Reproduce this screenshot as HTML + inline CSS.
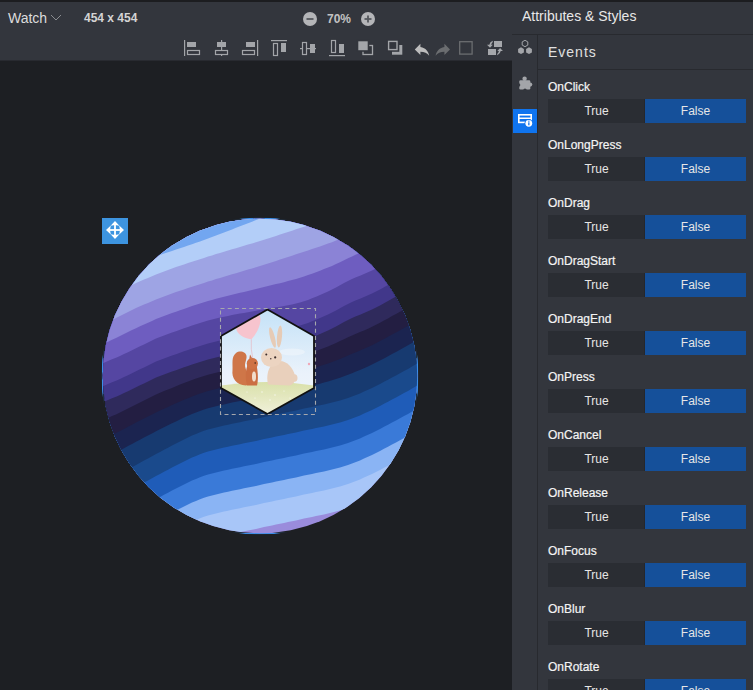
<!DOCTYPE html>
<html><head><meta charset="utf-8">
<style>
*{margin:0;padding:0;box-sizing:border-box}
html,body{width:753px;height:690px;overflow:hidden;background:#33363d;font-family:"Liberation Sans",sans-serif;color:#e6e6e6}
.abs{position:absolute}
#topstrip{left:0;top:0;width:753px;height:2px;background:#1c1d20}
#canvas{left:0;top:60px;width:512px;height:630px;background:#1d1f23;border-top:1px solid #282a30}
.t{position:absolute;white-space:nowrap;line-height:1}
#hdrline{left:512px;top:34px;width:241px;height:1px;background:#282a2f}
#vline{left:537px;top:35px;width:1px;height:655px;background:#282a2f}
#evline{left:538px;top:69px;width:215px;height:1px;background:#282a2f}
.lbl{position:absolute;left:548px;font-size:12px;color:#f4f4f4;line-height:1;-webkit-text-stroke:0.2px #f4f4f4}
.bt{position:absolute;left:548px;width:97px;height:24px;background:#2a2d33;box-shadow:inset -1px 0 0 #25272c;color:#e6e6e6;font-size:12px;line-height:24px;text-align:center}
.bf{position:absolute;left:645px;width:101px;height:24px;background:#15509a;color:#e6e6e6;font-size:12px;line-height:24px;text-align:center}
</style></head><body>
<div id="topstrip" class="abs"></div>
<div id="canvas" class="abs"></div>
<svg class="abs" style="left:0;top:0" width="512" height="690" viewBox="0 0 512 690">
<defs><clipPath id="cc"><circle cx="260" cy="376" r="157.2"/></clipPath><clipPath id="cc2"><circle cx="260" cy="376" r="158.6"/></clipPath>
<clipPath id="hx"><polygon points="267.5,309.5 314,336 314,388 267.5,414 221,388 221,336"/></clipPath>
<linearGradient id="sky" x1="0" y1="0" x2="0" y2="1"><stop offset="0" stop-color="#c2e1f7"/><stop offset="0.6" stop-color="#eaf2fb"/><stop offset="1" stop-color="#f2f6fb"/></linearGradient>
<linearGradient id="grass" x1="0" y1="0" x2="0" y2="1"><stop offset="0" stop-color="#d9e0aa"/><stop offset="0.5" stop-color="#e6e9c4"/><stop offset="1" stop-color="#f3f2e0"/></linearGradient>
</defs>
<rect x="102.5" y="218.5" width="315" height="315" fill="none" stroke="#3b8ee8" stroke-width="1.3" clip-path="url(#cc2)"/>
<g clip-path="url(#cc)">
<rect x="96" y="210" width="330" height="330" fill="#9a8cdc"/>
<polygon points="96,200 96,598.0 100,595.6 104,593.3 108,590.9 112,588.6 116,586.3 120,584.0 124,581.7 128,579.5 132,577.2 136,575.0 140,572.8 144,570.6 148,568.5 152,566.3 156,564.1 160,562.0 164,559.8 168,557.7 172,555.6 176,553.4 180,551.4 184,549.4 188,547.4 192,545.6 196,543.9 200,542.3 204,540.8 208,539.6 212,538.5 216,537.5 220,536.5 224,535.6 228,534.7 232,533.8 236,533.0 240,532.2 244,531.3 248,530.5 252,529.7 256,528.9 260,528.0 264,527.1 268,526.3 272,525.5 276,524.6 280,523.8 284,523.0 288,522.1 292,521.3 296,520.4 300,519.5 304,518.6 308,517.7 312,516.9 316,516.1 320,515.2 324,514.4 328,513.5 332,512.6 336,511.5 340,510.5 344,509.3 348,508.0 352,506.6 356,505.0 360,503.4 364,501.6 368,499.8 372,497.9 376,495.9 380,493.9 384,491.8 388,489.7 392,487.6 396,485.5 400,483.3 404,481.1 408,478.9 412,476.5 416,474.2 420,471.9 424,469.5 426,200" fill="#a8c6f8"/>
<polygon points="96,200 96,574.0 100,571.6 104,569.3 108,566.9 112,564.6 116,562.3 120,560.0 124,557.7 128,555.5 132,553.2 136,551.0 140,548.8 144,546.6 148,544.5 152,542.3 156,540.1 160,538.0 164,535.8 168,533.7 172,531.6 176,529.4 180,527.4 184,525.4 188,523.4 192,521.6 196,519.9 200,518.3 204,516.8 208,515.6 212,514.5 216,513.5 220,512.5 224,511.6 228,510.7 232,509.8 236,509.0 240,508.2 244,507.3 248,506.5 252,505.7 256,504.9 260,504.0 264,503.1 268,502.3 272,501.5 276,500.6 280,499.8 284,499.0 288,498.1 292,497.3 296,496.4 300,495.5 304,494.6 308,493.7 312,492.9 316,492.1 320,491.2 324,490.4 328,489.5 332,488.6 336,487.5 340,486.5 344,485.3 348,484.0 352,482.6 356,481.0 360,479.4 364,477.6 368,475.8 372,473.9 376,471.9 380,469.9 384,467.8 388,465.7 392,463.6 396,461.5 400,459.3 404,457.1 408,454.9 412,452.5 416,450.2 420,447.9 424,445.5 426,200" fill="#8ab4f4"/>
<polygon points="96,200 96,555.0 100,552.6 104,550.3 108,547.9 112,545.6 116,543.3 120,541.0 124,538.7 128,536.5 132,534.2 136,532.0 140,529.8 144,527.6 148,525.5 152,523.3 156,521.1 160,519.0 164,516.8 168,514.7 172,512.6 176,510.4 180,508.4 184,506.4 188,504.4 192,502.6 196,500.9 200,499.3 204,497.8 208,496.6 212,495.5 216,494.5 220,493.5 224,492.6 228,491.7 232,490.8 236,490.0 240,489.2 244,488.3 248,487.5 252,486.7 256,485.9 260,485.0 264,484.1 268,483.3 272,482.5 276,481.6 280,480.8 284,480.0 288,479.1 292,478.3 296,477.4 300,476.5 304,475.6 308,474.7 312,473.9 316,473.1 320,472.2 324,471.4 328,470.5 332,469.6 336,468.5 340,467.5 344,466.3 348,465.0 352,463.6 356,462.0 360,460.4 364,458.6 368,456.8 372,454.9 376,452.9 380,450.9 384,448.8 388,446.7 392,444.6 396,442.5 400,440.3 404,438.1 408,435.9 412,433.5 416,431.2 420,428.9 424,426.5 426,200" fill="#3a7ad8"/>
<polygon points="96,200 96,533.0 100,530.6 104,528.3 108,525.9 112,523.6 116,521.3 120,519.0 124,516.7 128,514.5 132,512.2 136,510.0 140,507.8 144,505.6 148,503.5 152,501.3 156,499.1 160,497.0 164,494.8 168,492.7 172,490.6 176,488.4 180,486.4 184,484.4 188,482.4 192,480.6 196,478.9 200,477.3 204,475.8 208,474.6 212,473.5 216,472.5 220,471.5 224,470.6 228,469.7 232,468.8 236,468.0 240,467.2 244,466.3 248,465.5 252,464.7 256,463.9 260,463.0 264,462.1 268,461.3 272,460.5 276,459.6 280,458.8 284,458.0 288,457.1 292,456.3 296,455.4 300,454.5 304,453.6 308,452.7 312,451.9 316,451.1 320,450.2 324,449.4 328,448.5 332,447.6 336,446.5 340,445.5 344,444.3 348,443.0 352,441.6 356,440.0 360,438.4 364,436.6 368,434.8 372,432.9 376,430.9 380,428.9 384,426.8 388,424.7 392,422.6 396,420.5 400,418.3 404,416.1 408,413.9 412,411.5 416,409.2 420,406.9 424,404.5 426,200" fill="#1f5cb8"/>
<polygon points="96,200 96,510.0 100,507.6 104,505.3 108,502.9 112,500.6 116,498.3 120,496.0 124,493.7 128,491.5 132,489.2 136,487.0 140,484.8 144,482.6 148,480.5 152,478.3 156,476.1 160,474.0 164,471.8 168,469.7 172,467.6 176,465.4 180,463.4 184,461.4 188,459.4 192,457.6 196,455.9 200,454.3 204,452.8 208,451.6 212,450.5 216,449.5 220,448.5 224,447.6 228,446.7 232,445.8 236,445.0 240,444.2 244,443.3 248,442.5 252,441.7 256,440.9 260,440.0 264,439.1 268,438.3 272,437.5 276,436.6 280,435.8 284,435.0 288,434.1 292,433.3 296,432.4 300,431.5 304,430.6 308,429.7 312,428.9 316,428.1 320,427.2 324,426.4 328,425.5 332,424.6 336,423.5 340,422.5 344,421.3 348,420.0 352,418.6 356,417.0 360,415.4 364,413.6 368,411.8 372,409.9 376,407.9 380,405.9 384,403.8 388,401.7 392,399.6 396,397.5 400,395.3 404,393.1 408,390.9 412,388.5 416,386.2 420,383.9 424,381.5 426,200" fill="#1a4a8c"/>
<polygon points="96,200 96,488.0 100,485.6 104,483.3 108,480.9 112,478.6 116,476.3 120,474.0 124,471.7 128,469.5 132,467.2 136,465.0 140,462.8 144,460.6 148,458.5 152,456.3 156,454.1 160,452.0 164,449.8 168,447.7 172,445.6 176,443.4 180,441.4 184,439.4 188,437.4 192,435.6 196,433.9 200,432.3 204,430.8 208,429.6 212,428.5 216,427.5 220,426.5 224,425.6 228,424.7 232,423.8 236,423.0 240,422.2 244,421.3 248,420.5 252,419.7 256,418.9 260,418.0 264,417.1 268,416.3 272,415.5 276,414.6 280,413.8 284,413.0 288,412.1 292,411.3 296,410.4 300,409.5 304,408.6 308,407.7 312,406.9 316,406.1 320,405.2 324,404.4 328,403.5 332,402.6 336,401.5 340,400.5 344,399.3 348,398.0 352,396.6 356,395.0 360,393.4 364,391.6 368,389.8 372,387.9 376,385.9 380,383.9 384,381.8 388,379.7 392,377.6 396,375.5 400,373.3 404,371.1 408,368.9 412,366.5 416,364.2 420,361.9 424,359.5 426,200" fill="#173a70"/>
<polygon points="96,200 96,464.0 100,461.5 104,459.1 108,456.9 112,454.8 116,452.7 120,450.5 124,448.3 128,446.1 132,444.0 136,441.8 140,439.7 144,437.6 148,435.5 152,433.4 156,431.3 160,429.2 164,427.3 168,425.3 172,423.3 176,421.4 180,419.5 184,417.6 188,415.8 192,414.1 196,412.4 200,410.9 204,409.5 208,408.3 212,407.2 216,406.2 220,405.3 224,404.4 228,403.5 232,402.6 236,401.8 240,401.0 244,400.2 248,399.4 252,398.6 256,397.8 260,397.0 264,396.2 268,395.4 272,394.6 276,393.8 280,393.0 284,392.2 288,391.4 292,390.6 296,389.7 300,388.8 304,387.8 308,386.8 312,385.8 316,384.7 320,383.7 324,382.6 328,381.5 332,380.3 336,379.0 340,377.7 344,376.2 348,374.7 352,373.2 356,371.6 360,370.0 364,368.2 368,366.4 372,364.5 376,362.5 380,360.5 384,358.4 388,356.2 392,354.1 396,352.0 400,349.8 404,347.6 408,345.3 412,343.1 416,340.7 420,338.4 424,336.0 426,200" fill="#1b2450"/>
<polygon points="96,200 96,444.0 100,441.3 104,439.0 108,436.9 112,434.9 116,433.0 120,431.0 124,428.9 128,426.8 132,424.7 136,422.6 140,420.6 144,418.5 148,416.5 152,414.4 156,412.4 160,410.5 164,408.7 168,406.9 172,405.1 176,403.3 180,401.6 184,399.8 188,398.2 192,396.6 196,395.0 200,393.6 204,392.3 208,391.1 212,390.0 216,389.0 220,388.0 224,387.1 228,386.3 232,385.5 236,384.7 240,383.9 244,383.1 248,382.4 252,381.6 256,380.8 260,380.0 264,379.2 268,378.4 272,377.7 276,377.0 280,376.3 284,375.5 288,374.7 292,373.9 296,373.0 300,372.0 304,370.9 308,369.8 312,368.6 316,367.4 320,366.1 324,364.8 328,363.4 332,362.0 336,360.5 340,358.9 344,357.2 348,355.5 352,353.8 356,352.2 360,350.5 364,348.8 368,347.0 372,345.2 376,343.2 380,341.1 384,339.0 388,336.8 392,334.6 396,332.5 400,330.3 404,328.1 408,325.8 412,323.6 416,321.3 420,318.9 424,316.6 426,200" fill="#231e42"/>
<polygon points="96,200 96,424.9 100,422.2 104,419.8 108,417.9 112,416.1 116,414.4 120,412.5 124,410.5 128,408.5 132,406.5 136,404.5 140,402.4 144,400.4 148,398.5 152,396.5 156,394.5 160,392.8 164,391.1 168,389.5 172,387.9 176,386.2 180,384.6 184,383.1 188,381.5 192,380.0 196,378.6 200,377.3 204,376.0 208,374.8 212,373.7 216,372.7 220,371.8 224,370.9 228,370.1 232,369.3 236,368.5 240,367.8 244,367.0 248,366.3 252,365.5 256,364.8 260,364.0 264,363.2 268,362.5 272,361.8 276,361.2 280,360.5 284,359.8 288,359.0 292,358.2 296,357.3 300,356.2 304,355.1 308,353.8 312,352.5 316,351.0 320,349.5 324,348.0 328,346.4 332,344.8 336,343.0 340,341.1 344,339.2 348,337.2 352,335.4 356,333.7 360,332.1 364,330.4 368,328.7 372,326.8 376,324.8 380,322.7 384,320.6 388,318.4 392,316.1 396,314.0 400,311.8 404,309.6 408,307.3 412,305.1 416,302.8 420,300.5 424,298.1 426,200" fill="#2f2a5c"/>
<polygon points="96,200 96,406.9 100,404.0 104,401.7 108,399.9 112,398.3 116,396.7 120,395.0 124,393.1 128,391.2 132,389.2 136,387.3 140,385.3 144,383.4 148,381.5 152,379.5 156,377.6 160,376.0 164,374.6 168,373.1 172,371.6 176,370.2 180,368.7 184,367.3 188,365.9 192,364.5 196,363.2 200,361.9 204,360.7 208,359.5 212,358.5 216,357.5 220,356.5 224,355.7 228,354.9 232,354.1 236,353.3 240,352.6 244,351.9 248,351.2 252,350.5 256,349.8 260,349.0 264,348.3 268,347.6 272,346.9 276,346.3 280,345.7 284,345.0 288,344.3 292,343.5 296,342.6 300,341.5 304,340.3 308,338.9 312,337.3 316,335.7 320,334.0 324,332.2 328,330.4 332,328.5 336,326.5 340,324.3 344,322.1 348,320.0 352,318.1 356,316.3 360,314.7 364,313.0 368,311.3 372,309.5 376,307.5 380,305.4 384,303.2 388,300.9 392,298.7 396,296.4 400,294.2 404,292.0 408,289.8 412,287.6 416,285.3 420,283.0 424,280.6 426,200" fill="#41378a"/>
<polygon points="96,200 96,390.9 100,388.0 104,385.7 108,383.9 112,382.3 116,380.7 120,379.0 124,377.1 128,375.2 132,373.2 136,371.3 140,369.3 144,367.4 148,365.5 152,363.5 156,361.6 160,360.0 164,358.6 168,357.1 172,355.6 176,354.2 180,352.7 184,351.3 188,349.9 192,348.5 196,347.2 200,345.9 204,344.7 208,343.5 212,342.5 216,341.5 220,340.5 224,339.7 228,338.9 232,338.1 236,337.3 240,336.6 244,335.9 248,335.2 252,334.5 256,333.8 260,333.0 264,332.3 268,331.6 272,330.9 276,330.3 280,329.7 284,329.0 288,328.3 292,327.5 296,326.6 300,325.5 304,324.3 308,322.9 312,321.3 316,319.7 320,318.0 324,316.2 328,314.4 332,312.5 336,310.5 340,308.3 344,306.1 348,304.0 352,302.1 356,300.3 360,298.7 364,297.0 368,295.3 372,293.5 376,291.5 380,289.4 384,287.2 388,284.9 392,282.7 396,280.4 400,278.2 404,276.0 408,273.8 412,271.6 416,269.3 420,267.0 424,264.6 426,200" fill="#5546a2"/>
<polygon points="96,200 96,367.9 100,365.0 104,362.7 108,360.9 112,359.3 116,357.7 120,356.0 124,354.1 128,352.2 132,350.2 136,348.3 140,346.3 144,344.4 148,342.5 152,340.5 156,338.6 160,337.0 164,335.6 168,334.1 172,332.6 176,331.2 180,329.7 184,328.3 188,326.9 192,325.5 196,324.2 200,322.9 204,321.7 208,320.5 212,319.5 216,318.5 220,317.5 224,316.7 228,315.9 232,315.1 236,314.3 240,313.6 244,312.9 248,312.2 252,311.5 256,310.8 260,310.0 264,309.3 268,308.6 272,307.9 276,307.3 280,306.7 284,306.0 288,305.3 292,304.5 296,303.6 300,302.5 304,301.3 308,299.9 312,298.3 316,296.7 320,295.0 324,293.2 328,291.4 332,289.5 336,287.5 340,285.3 344,283.1 348,281.0 352,279.1 356,277.3 360,275.7 364,274.0 368,272.3 372,270.5 376,268.5 380,266.4 384,264.2 388,261.9 392,259.7 396,257.4 400,255.2 404,253.0 408,250.8 412,248.6 416,246.3 420,244.0 424,241.6 426,200" fill="#6e5dc0"/>
<polygon points="96,200 96,348.8 100,346.1 104,343.8 108,341.7 112,339.8 116,337.9 120,336.0 124,334.0 128,332.1 132,330.1 136,328.2 140,326.3 144,324.5 148,322.7 152,320.9 156,319.1 160,317.5 164,316.0 168,314.5 172,313.1 176,311.7 180,310.2 184,308.9 188,307.5 192,306.1 196,304.8 200,303.6 204,302.3 208,301.1 212,299.9 216,298.8 220,297.7 224,296.7 228,295.7 232,294.7 236,293.7 240,292.8 244,291.9 248,290.9 252,290.0 256,289.0 260,288.0 264,287.0 268,286.0 272,285.1 276,284.1 280,283.2 284,282.2 288,281.1 292,280.1 296,278.9 300,277.8 304,276.5 308,275.1 312,273.7 316,272.2 320,270.7 324,269.1 328,267.5 332,265.9 336,264.1 340,262.2 344,260.2 348,258.3 352,256.4 356,254.6 360,252.9 364,251.1 368,249.4 372,247.5 376,245.5 380,243.5 384,241.5 388,239.4 392,237.3 396,235.2 400,233.1 404,231.1 408,229.0 412,226.9 416,224.7 420,222.6 424,220.4 426,200" fill="#8b83d6"/>
<polygon points="96,200 96,329.7 100,327.3 104,324.9 108,322.6 112,320.3 116,318.1 120,316.0 124,313.9 128,311.9 132,310.0 136,308.1 140,306.3 144,304.6 148,302.9 152,301.2 156,299.6 160,298.0 164,296.5 168,295.0 172,293.5 176,292.1 180,290.8 184,289.4 188,288.1 192,286.8 196,285.5 200,284.2 204,282.9 208,281.6 212,280.4 216,279.1 220,277.9 224,276.7 228,275.5 232,274.3 236,273.2 240,272.0 244,270.8 248,269.6 252,268.4 256,267.2 260,266.0 264,264.7 268,263.5 272,262.2 276,260.9 280,259.6 284,258.3 288,257.0 292,255.7 296,254.3 300,253.0 304,251.7 308,250.4 312,249.0 316,247.7 320,246.4 324,245.1 328,243.6 332,242.2 336,240.6 340,239.0 344,237.3 348,235.6 352,233.8 356,232.0 360,230.1 364,228.3 368,226.4 372,224.5 376,222.6 380,220.7 384,218.7 388,216.8 392,214.9 396,212.9 400,211.0 404,209.1 408,207.1 412,205.1 416,203.1 420,201.1 424,199.1 426,200" fill="#9ea4e4"/>
<polygon points="96,200 96,304.7 100,302.3 104,299.9 108,297.6 112,295.3 116,293.1 120,291.0 124,288.9 128,286.9 132,285.0 136,283.1 140,281.3 144,279.6 148,277.9 152,276.2 156,274.6 160,273.0 164,271.5 168,270.0 172,268.5 176,267.1 180,265.8 184,264.4 188,263.1 192,261.8 196,260.5 200,259.2 204,257.9 208,256.6 212,255.4 216,254.1 220,252.9 224,251.7 228,250.5 232,249.3 236,248.2 240,247.0 244,245.8 248,244.6 252,243.4 256,242.2 260,241.0 264,239.7 268,238.5 272,237.2 276,235.9 280,234.6 284,233.3 288,232.0 292,230.7 296,229.3 300,228.0 304,226.7 308,225.4 312,224.0 316,222.7 320,221.4 324,220.1 328,218.6 332,217.2 336,215.6 340,214.0 344,212.3 348,210.6 352,208.8 356,207.0 360,205.1 364,203.3 368,201.4 372,199.5 376,197.6 380,195.7 384,193.7 388,191.8 392,189.9 396,187.9 400,186.0 404,184.1 408,182.1 412,180.1 416,178.1 420,176.1 424,174.1 426,200" fill="#b3cef8"/>
<polygon points="96,200 96,277.4 100,275.9 104,274.5 108,273.1 112,271.7 116,270.3 120,268.9 124,267.5 128,266.1 132,264.7 136,263.3 140,261.9 144,260.5 148,259.1 152,257.7 156,256.3 160,255.0 164,253.6 168,252.3 172,250.9 176,249.6 180,248.3 184,246.9 188,245.6 192,244.2 196,242.8 200,241.4 204,240.0 208,238.5 212,237.1 216,235.5 220,234.0 224,232.5 228,230.9 232,229.4 236,227.8 240,226.3 244,224.7 248,223.2 252,221.7 256,220.1 260,218.6 264,217.1 268,215.7 272,214.2 276,212.8 280,211.4 284,209.9 288,208.5 292,207.0 296,205.5 300,204.0 304,202.5 308,200.9 312,199.4 316,197.9 320,196.4 324,194.8 328,193.3 332,191.7 336,190.2 340,188.7 344,187.1 348,185.6 352,184.0 356,182.5 360,180.9 364,179.4 368,177.9 372,176.3 376,174.8 380,173.2 384,171.7 388,170.1 392,168.6 396,167.0 400,165.5 404,163.9 408,162.4 412,160.8 416,159.3 420,157.7 424,156.2 426,200" fill="#72a6f0"/>
</g>
<g clip-path="url(#hx)">
<rect x="218" y="306" width="100" height="112" fill="url(#sky)"/>
<path d="M218 386 Q 268 378 318 386 L318 418 L218 418 Z" fill="url(#grass)"/>
<rect x="218" y="306" width="0" height="0"/>
<!-- clouds -->
<ellipse cx="292" cy="352" rx="13" ry="3.5" fill="#f4f8fc" opacity="0.5"/>

<!-- balloon -->
<path d="M259.8 315.2 C 262.5 322, 257 334, 251.3 339.3 C 244 338.5, 236.2 334, 236.3 328.5 C 236.5 322, 248 314.5, 259.8 315.2 Z" fill="#f7c4ce"/>
<path d="M251.3 339.3 Q 250.5 349 253 360" stroke="#e7aeb8" stroke-width="0.6" fill="none"/>
<!-- squirrel tail -->
<path d="M246 385.5 C 236 385, 231.5 378, 232.5 370 C 233 364, 231 357, 236 353 C 240 350, 246 352, 246.5 356 C 247 360, 244 363, 245.5 368 C 247 373, 250 378, 249 384 Z" fill="#cf7648"/>
<!-- squirrel body -->
<path d="M247 385.5 C 245 378, 245.5 368, 248.5 363 L 256 363 C 258 370, 258.5 380, 257 385.5 Z" fill="#cb6e42"/>
<circle cx="252.3" cy="363.5" r="5.6" fill="#cf7245"/>
<path d="M249.3 359 L250 354.5 L252.3 358.5 Z" fill="#cb6e42"/>
<ellipse cx="254" cy="376.5" rx="2" ry="5" fill="#f1dccb"/>
<circle cx="255.2" cy="363" r="0.8" fill="#3a2218"/>
<!-- rabbit ears -->
<ellipse cx="272.5" cy="337.5" rx="2.4" ry="10.5" transform="rotate(-14 272.5 337.5)" fill="#e6cbb6"/>
<ellipse cx="279.5" cy="336.5" rx="2.5" ry="11" transform="rotate(5 279.5 336.5)" fill="#e6cbb6"/>
<!-- rabbit body -->
<path d="M268 384.5 C 266 376, 268 366, 275 362 C 284 358, 293 366, 295 376 C 296 381, 293 385, 289 385.5 Z" fill="#e9d0bc"/>
<ellipse cx="294.5" cy="378" rx="3" ry="3.8" fill="#e9d0bc"/>
<ellipse cx="271.5" cy="357.5" rx="10.5" ry="9.5" fill="#ecd4c1"/>
<circle cx="266.3" cy="354.6" r="1" fill="#3b2c2a"/>
<circle cx="275.2" cy="357.4" r="1.1" fill="#3b2c2a"/>
<circle cx="270.8" cy="358.8" r="0.7" fill="#3b2c2a"/>
<circle cx="309" cy="364" r="1.2" fill="#f0a7b8"/>
<g fill="#ffffff" opacity="0.8"><circle cx="262" cy="392" r="0.7"/><circle cx="275" cy="395" r="0.7"/><circle cx="284" cy="391" r="0.6"/><circle cx="270" cy="400" r="0.7"/><circle cx="255" cy="398" r="0.6"/><circle cx="290" cy="398" r="0.6"/><circle cx="247" cy="392" r="0.6"/></g>
</g>
<polygon points="267.5,309.5 314,336 314,388 267.5,414 221,388 221,336" fill="none" stroke="#111" stroke-width="1.8"/>
<rect x="220.5" y="308.5" width="95" height="106" fill="none" stroke="#a6a8ad" stroke-width="1.1" stroke-dasharray="4 3.2"/>
<!-- move handle -->
<rect x="102" y="218" width="26" height="26" fill="#3d94e0"/>
<g fill="#ffffff">
<rect x="114.1" y="223" width="1.8" height="14"/>
<rect x="108" y="229.1" width="14" height="1.8"/>
<path d="M115 221 L119.4 225.8 L115 225 L110.6 225.8 Z"/>
<path d="M115 239 L119.4 234.2 L115 235 L110.6 234.2 Z"/>
<path d="M106 230 L110.8 225.6 L110 230 L110.8 234.4 Z"/>
<path d="M124 230 L119.2 225.6 L120 230 L119.2 234.4 Z"/>
</g>
</svg>

<div class="t" style="left:8px;top:11px;font-size:14px;color:#dcdcdc">Watch</div>
<svg class="abs" style="left:50px;top:14px" width="12" height="8" viewBox="0 0 12 8"><path d="M1 1 L6 6 L11 1" fill="none" stroke="#8a8c90" stroke-width="1"/></svg>
<div class="t" style="left:84px;top:12px;font-size:12px;font-weight:bold;color:#d4d4d4">454 x 454</div>


<svg class="abs" style="left:0;top:0" width="512" height="60" viewBox="0 0 512 60">
<g fill="#a3a5a9" stroke="none">
<!-- align left -->
<rect x="184" y="40" width="1.2" height="16"/>
<rect x="187" y="42" width="9" height="5"/>
<rect x="187.5" y="50.5" width="12" height="4" fill="none" stroke="#a3a5a9" stroke-width="1.2"/>
<!-- align center h -->
<rect x="221" y="40" width="1.2" height="16"/>
<rect x="217" y="42" width="9" height="5"/>
<rect x="215.5" y="50.5" width="12" height="4" fill="#33363d" stroke="#a3a5a9" stroke-width="1.2"/>
<!-- align right -->
<rect x="257" y="40" width="1.2" height="16"/>
<rect x="246" y="42" width="9" height="5"/>
<rect x="242.5" y="50.5" width="12" height="4" fill="none" stroke="#a3a5a9" stroke-width="1.2"/>
<!-- align top -->
<rect x="271" y="40" width="16" height="1.2"/>
<rect x="273.5" y="43.5" width="4" height="12" fill="none" stroke="#a3a5a9" stroke-width="1.2"/>
<rect x="281" y="43" width="5" height="9"/>
<!-- align middle -->
<rect x="300" y="48" width="16" height="1.2"/>
<rect x="302.5" y="42.5" width="4" height="12" fill="#33363d" stroke="#a3a5a9" stroke-width="1.2"/>
<rect x="310" y="44" width="5" height="9"/>
<!-- align bottom -->
<rect x="329" y="55" width="16" height="1.2"/>
<rect x="331.5" y="40.5" width="4" height="12" fill="none" stroke="#a3a5a9" stroke-width="1.2"/>
<rect x="339" y="44" width="5" height="9"/>
<!-- bring front -->
<rect x="363" y="45.5" width="9.5" height="9" fill="none" stroke="#a3a5a9" stroke-width="1.3"/>
<rect x="357.5" y="40.5" width="11" height="10.5" fill="#a3a5a9" stroke="#33363d" stroke-width="1.6"/>
<!-- send back -->
<rect x="392" y="45" width="10.3" height="9.7"/>
<rect x="387" y="40" width="11.5" height="11" fill="#33363d" stroke="#33363d" stroke-width="1.6"/>
<rect x="388.6" y="41.4" width="8.4" height="8.2" fill="#33363d" stroke="#a3a5a9" stroke-width="1.4"/>
</g>
<path transform="translate(412.4 39.8) scale(0.8)" d="M10 9V5l-7 7 7 7v-4.1c5 0 8.5 1.6 11 5.1-1-5-4-10-11-11z" fill="#bdbdbd"/>
<path transform="translate(452.4 39.8) scale(-0.8 0.8)" d="M10 9V5l-7 7 7 7v-4.1c5 0 8.5 1.6 11 5.1-1-5-4-10-11-11z" fill="#6b6d70"/>
<rect x="459.7" y="41.7" width="12.4" height="12.4" fill="none" stroke="#6b6d70" stroke-width="1.3"/>
<g fill="#a5a7ab">
<rect x="494" y="41" width="8" height="6"/>
<rect x="488" y="49" width="8" height="6"/>
<path d="M487 44.8 L492.8 44.8 L490 47.7 Z"/>
<path d="M492.6 40.8 Q489.6 42.2 489.2 45.2 L491 45.2 Q491.4 43.2 492.8 42 Z"/>
<path d="M497.3 51 L502.9 51 L500.1 48.1 Z"/>
<path d="M497.4 55.2 Q500.4 53.8 500.8 50.8 L499 50.8 Q498.6 52.8 497.2 54 Z"/>
</g>
<!-- zoom -->
<circle cx="310" cy="19" r="7" fill="#b4b5b8"/>
<rect x="306.5" y="18.1" width="7" height="1.8" fill="#55585e"/>
<circle cx="368" cy="19" r="7" fill="#b4b5b8"/>
<rect x="364.5" y="18.1" width="7" height="1.8" fill="#55585e"/>
<rect x="367.1" y="15.5" width="1.8" height="7" fill="#55585e"/>
</svg>
<div class="t" style="left:327px;top:13px;font-size:12px;font-weight:bold;color:#c2c2c2">70%</div>
<div class="t" style="left:522px;top:9px;font-size:14px;color:#e8e8e8">Attributes &amp; Styles</div>
<div id="hdrline" class="abs"></div>
<div id="vline" class="abs"></div>
<div id="evline" class="abs"></div>
<div class="t" style="left:548px;top:45px;font-size:14px;color:#e0e0e0;letter-spacing:1px">Events</div>

<div class="lbl" style="top:81px">OnClick</div><div class="bt" style="top:99px">True</div><div class="bf" style="top:99px">False</div>
<div class="lbl" style="top:139px">OnLongPress</div><div class="bt" style="top:157px">True</div><div class="bf" style="top:157px">False</div>
<div class="lbl" style="top:197px">OnDrag</div><div class="bt" style="top:215px">True</div><div class="bf" style="top:215px">False</div>
<div class="lbl" style="top:255px">OnDragStart</div><div class="bt" style="top:273px">True</div><div class="bf" style="top:273px">False</div>
<div class="lbl" style="top:313px">OnDragEnd</div><div class="bt" style="top:331px">True</div><div class="bf" style="top:331px">False</div>
<div class="lbl" style="top:371px">OnPress</div><div class="bt" style="top:389px">True</div><div class="bf" style="top:389px">False</div>
<div class="lbl" style="top:429px">OnCancel</div><div class="bt" style="top:447px">True</div><div class="bf" style="top:447px">False</div>
<div class="lbl" style="top:487px">OnRelease</div><div class="bt" style="top:505px">True</div><div class="bf" style="top:505px">False</div>
<div class="lbl" style="top:545px">OnFocus</div><div class="bt" style="top:563px">True</div><div class="bf" style="top:563px">False</div>
<div class="lbl" style="top:603px">OnBlur</div><div class="bt" style="top:621px">True</div><div class="bf" style="top:621px">False</div>
<div class="lbl" style="top:661px">OnRotate</div><div class="bt" style="top:679px">True</div><div class="bf" style="top:679px">False</div>


<svg class="abs" style="left:512px;top:35px" width="25" height="100" viewBox="512 35 25 100">
<g fill="#a3a5a9">
<polygon points="525,40.3 527.8,41.9 527.8,45.1 525,46.7 522.2,45.1 522.2,41.9" fill="none" stroke="#a3a5a9" stroke-width="1"/>
<polygon points="521,47.3 523.9,49 523.9,52.4 521,54.1 518.1,52.4 518.1,49"/>
<polygon points="529,47.3 531.9,49 531.9,52.4 529,54.1 526.1,52.4 526.1,49"/>
<rect x="519.3" y="80.3" width="11" height="9.2" rx="1.2"/>
<circle cx="524.6" cy="78.7" r="2.2"/>
<circle cx="530.2" cy="84.6" r="2.1"/>
<circle cx="518.6" cy="85" r="1.7" fill="#33363d"/>
<circle cx="525" cy="90.3" r="1.7" fill="#33363d"/>
</g>
</svg>
<svg class="abs" style="left:513px;top:109px" width="24" height="24" viewBox="513 109 24 24">
<rect x="513" y="109" width="24" height="24" fill="#0f74ef"/>
<rect x="518.8" y="114.8" width="12.4" height="7.6" fill="none" stroke="#fff" stroke-width="1.6"/>
<rect x="519" y="117.5" width="12" height="1.5" fill="#fff"/>
<circle cx="528.8" cy="123.3" r="4.3" fill="#0f74ef"/>
<circle cx="528.8" cy="123.3" r="3.4" fill="#fff"/>
<rect x="528.2" y="122.3" width="1.3" height="3" fill="#0f74ef"/>
<rect x="528.2" y="120.7" width="1.3" height="1" fill="#0f74ef"/>
</svg>

</body></html>
